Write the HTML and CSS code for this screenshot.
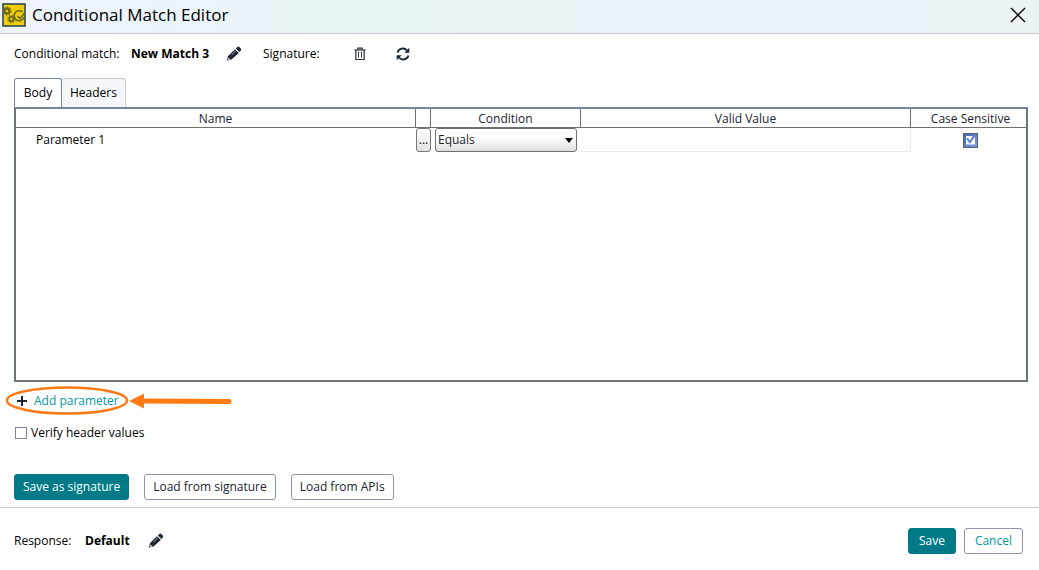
FILE: index.html
```html
<!DOCTYPE html>
<html lang="en">
<head>
  <meta charset="UTF-8">
  <title>Conditional Match Editor</title>
  <meta name="viewport" content="width=device-width, initial-scale=1.0">
  <link rel="stylesheet" href="styles.css">
</head>
<body>

<header class="titlebar">
  <svg class="app-icon" width="24" height="24" viewBox="0 0 24 24" aria-hidden="true">
    <rect x="1" y="1" width="22" height="22" fill="#f0cc08" stroke="#26424a" stroke-width="1.500"/>
    <g fill="none" stroke="#6e6a1c">
      <circle cx="5" cy="8" r="2.5" stroke-width="2.5"/>
      <circle cx="5" cy="8" r="4" stroke-width="1" stroke-dasharray="1.5 1.5"/>
      <circle cx="9.500" cy="16" r="2.2" stroke-width="2"/>
      <circle cx="9.500" cy="16" r="3.800" stroke-width="1" stroke-dasharray="1.5 1.5"/>
      <path d="M20.500 9A5 5 0 1 0 22 14" stroke-width="1.500"/>
      <path d="M15.500 13l2.500 2.500 5-6" stroke-width="1.700"/>
    </g>
  </svg>
  <h1>Conditional Match Editor</h1>
  <button type="button" class="icon-btn close" aria-label="Close">
    <svg width="16" height="16" viewBox="0 0 16 16"><path d="M1 1l14 14M15 1L1 15" stroke="#111" stroke-width="1.500"/></svg>
  </button>
</header>

<main>
  <div class="match-row">
    <span class="match-label">Conditional match:</span>
    <strong class="match-name">New Match 3</strong>
    <button type="button" class="icon-btn edit" aria-label="Edit match name">
      <svg width="16" height="16" viewBox="0 0 16 16"><path d="M1 14.500l1-4.500 7-6.800 3.800 3.800L5.500 13.500z" fill="#1d2733"/><path d="M9.800 2.500l1.500-1.500q1-.8 2 0l1.500 1.500q.8 1 0 2L13.300 6z" fill="#1d2733"/><path d="M2.500 11.500l2 2-2 .3-.3-.3z" fill="#fff"/><path d="M5.500 9L9.500 5" stroke="#fff" stroke-width=".6"/></svg>
    </button>
    <span class="signature-label">Signature:</span>
    <button type="button" class="icon-btn trash" aria-label="Delete signature">
      <svg width="12" height="14" viewBox="0 0 12 14" fill="none" stroke="#27303b"><path d="M.5 3h11" stroke-width="1.200"/><path d="M3.800 3V1.200h4.400V3M1.800 3v9.500h8.400V3" stroke-width="1.200"/><path d="M4.500 5v5.500M7.500 5v5.500" stroke-width="1"/></svg>
    </button>
    <button type="button" class="icon-btn" aria-label="Refresh signature">
      <svg width="14" height="14" viewBox="0 0 14 14"><path d="M1.600 5.500A5.400 5.400 0 0 1 11 3.500M12.400 8.500A5.400 5.400 0 0 1 3 10.500" fill="none" stroke="#1d2733" stroke-width="1.900"/><path d="M13.300.8v5h-5zM.7 13.200v-5h5z" fill="#1d2733"/></svg>
    </button>
  </div>

  <div class="tabs" role="tablist">
    <button type="button" role="tab" class="tab active" aria-selected="true">Body</button>
    <button type="button" role="tab" class="tab" aria-selected="false">Headers</button>
  </div>

  <div class="panel">
    <table class="params">
      <colgroup>
        <col class="col-name">
        <col class="col-more">
        <col class="col-condition">
        <col class="col-value">
        <col class="col-case">
      </colgroup>
      <thead>
        <tr>
          <th>Name</th>
          <th></th>
          <th>Condition</th>
          <th>Valid Value</th>
          <th class="case">Case Sensitive</th>
        </tr>
      </thead>
      <tbody>
        <tr>
          <td class="name">Parameter 1</td>
          <td><button type="button" class="more" aria-label="More">...</button></td>
          <td class="condition">
            <div class="select-wrap">
              <select aria-label="Condition">
                <option>Equals</option>
              </select>
              <svg class="caret" width="8" height="5" viewBox="0 0 8 5"><path d="M0 0h8L4 5z"/></svg>
            </div>
          </td>
          <td class="value"><input type="text" aria-label="Valid Value"></td>
          <td class="case"><input type="checkbox" class="case-check" aria-label="Case Sensitive" checked></td>
        </tr>
      </tbody>
    </table>
  </div>

  <div class="add-row">
    <button type="button" class="add">
      <svg width="10" height="10" viewBox="0 0 10 10"><path d="M5 0v10M0 5h10" stroke="#1d2733" stroke-width="2"/></svg>
      Add parameter
    </button>
    <svg class="callout" width="228" height="32" viewBox="0 0 228 32" aria-hidden="true">
      <ellipse cx="62" cy="15.500" rx="60" ry="13" fill="none" stroke="#ff7a12" stroke-width="2.500"/>
      <path d="M136 16l88 .6" stroke="#ff7a12" stroke-width="5" stroke-linecap="round"/>
      <path d="M124 16l15-7.500v15z" fill="#ff7a12"/>
    </svg>
  </div>

  <div class="verify-row">
    <input type="checkbox" id="verify" class="verify-check">
    <label for="verify">Verify header values</label>
  </div>

  <div class="actions">
    <button type="button" class="btn primary">Save as signature</button>
    <button type="button" class="btn">Load from signature</button>
    <button type="button" class="btn">Load from APIs</button>
  </div>
</main>

<footer>
  <span class="response-label">Response:</span>
  <strong class="response-name">Default</strong>
  <button type="button" class="icon-btn" aria-label="Edit response">
    <svg width="16" height="16" viewBox="0 0 16 16"><path d="M1 14.500l1-4.500 7-6.800 3.800 3.800L5.500 13.500z" fill="#1d2733"/><path d="M9.800 2.500l1.500-1.500q1-.8 2 0l1.500 1.500q.8 1 0 2L13.300 6z" fill="#1d2733"/><path d="M2.500 11.500l2 2-2 .3-.3-.3z" fill="#fff"/><path d="M5.500 9L9.500 5" stroke="#fff" stroke-width=".6"/></svg>
  </button>
  <div class="footer-actions">
    <button type="button" class="btn primary">Save</button>
    <button type="button" class="btn cancel">Cancel</button>
  </div>
</footer>

</body>
</html>
```
FILE: styles.css
```css
* {
  box-sizing: border-box;
}

body {
  margin: 0;
  min-height: 100vh;
  background: #fff;
  color: #000;
  font-family: "Open Sans", "Segoe UI", sans-serif;
  font-size: 12px;
  line-height: 16px;
}

button, input, select {
  font: inherit;
  color: inherit;
}

button {
  padding: 0;
  cursor: pointer;
}

svg {
  display: block;
}

.titlebar {
  display: flex;
  align-items: center;
  gap: 6px;
  height: 34px;
  padding: 0 13px 4px 2px;
  background: linear-gradient(90deg, #eef3fa, #e9f4f7 30%, #ebf3f7);
  border-bottom: 1px solid #c8c8d0;
}

.titlebar h1 {
  margin: 0;
  font-size: 17px;
  line-height: 24px;
  font-weight: 400;
}

.icon-btn {
  border: none;
  background: none;
}

.close {
  margin-left: auto;
}

main {
  padding: 10px 11px 7px 14px;
}

.match-row {
  display: flex;
  align-items: center;
  height: 20px;
}

.match-label {
  width: 117px;
}

.match-name {
  width: 95px;
}

.signature-label {
  width: 91px;
  margin-left: 21px;
}

.trash {
  margin-right: 30px;
}

.tabs {
  display: flex;
  margin-top: 14px;
}

.tab {
  height: 29px;
  min-width: 48px;
  padding: 0 8px;
  border: 1px solid #c9c9c9;
  border-bottom: none;
  border-left: none;
  border-radius: 3px 3px 0 0;
  background: #f4f6f9;
}

.tab.active {
  border: 1px solid #7688a3;
  border-bottom: none;
  background: #fff;
}

.panel {
  height: 275px;
  border: 2px solid #6d7480;
  border-top-color: #75849c;
}

.params {
  width: 100%;
  table-layout: fixed;
  border-collapse: separate;
  border-spacing: 0;
}

.col-name {
  width: 400px;
}

.col-more {
  width: 15px;
}

.col-condition {
  width: 150px;
}

.col-case {
  width: 115px;
}

.params th {
  height: 19px;
  padding: 1px 0 0;
  border-right: 1px solid #6f6f6f;
  border-bottom: 1px solid #6f6f6f;
  font-weight: 400;
  line-height: 16px;
  color: #1e2430;
}

.params th:last-child {
  border-right: none;
}

.params td {
  height: 24px;
  padding: 0;
}

.params .name {
  padding-left: 20px;
}

.more {
  display: block;
  width: 15px;
  height: 24px;
  border: 1px solid #767676;
  border-radius: 3px;
  background: linear-gradient(#fff, #e2e2e2);
}

.params .condition {
  padding: 0 4px;
}

.select-wrap {
  position: relative;
}

.select-wrap select {
  display: block;
  width: 100%;
  height: 24px;
  padding: 0 2px;
  border: 1px solid #6f6f6f;
  border-radius: 3px;
  background: linear-gradient(#fff 40%, #dedede);
  color: #1e2430;
  appearance: none;
}

.caret {
  position: absolute;
  right: 4px;
  top: 10px;
  pointer-events: none;
}

.value input {
  display: block;
  width: 100%;
  height: 24px;
  border: 1px solid #ececec;
  border-top: none;
  border-left: none;
}

.params .case {
  padding-left: 4px;
  text-align: center;
}

.case-check, .verify-check {
  appearance: none;
  margin: 0;
}

.case-check {
  display: block;
  width: 15px;
  height: 15px;
  margin: 0 auto;
  border: 1px solid #5c6068;
  background: linear-gradient(135deg, #3f66b4, #7fa0e0);
  padding: 2px;
}

/* white box with the tick cut out of it */
.case-check:checked::before {
  content: "";
  display: block;
  height: 9px;
  background: #fff;
  clip-path: polygon(0 0, 80% 0, 45% 55%, 18% 25%, 5% 35%, 42% 95%, 100% 15%, 100% 100%, 0 100%);
}

.add-row {
  position: relative;
  display: flex;
  align-items: center;
  height: 38px;
}

.add {
  display: flex;
  align-items: center;
  gap: 7px;
  margin-left: 3px;
  border: none;
  background: none;
  color: #0097a7;
}

/* highlight ring and arrow lie over the add button */
.callout {
  position: absolute;
  left: -9px;
  top: 3px;
  pointer-events: none;
}

.verify-row {
  display: flex;
  align-items: center;
  gap: 4px;
  height: 26px;
  padding-left: 1px;
}

.verify-check {
  width: 12px;
  height: 12px;
  border: 1px solid #7d8797;
  background: #fff;
}

.actions {
  display: flex;
  gap: 15px;
  margin-top: 28px;
}

.btn {
  height: 26px;
  padding: 0 10px;
  border: 1px solid #8e96ad;
  border-radius: 3px;
  background: #fff;
  color: #1e2430;
}

.actions .btn {
  padding: 0 8px;
}

.btn.primary {
  border-color: #007a87;
  background: #007a87;
  color: #fff;
}

.btn.cancel {
  color: #0097a7;
}

footer {
  display: flex;
  align-items: center;
  height: 63px;
  padding: 3px 16px 0 14px;
  border-top: 1px solid #c8c8c8;
}

.response-label {
  width: 71px;
}

.response-name {
  width: 63px;
}

.footer-actions {
  display: flex;
  gap: 8px;
  margin-left: auto;
}
```
